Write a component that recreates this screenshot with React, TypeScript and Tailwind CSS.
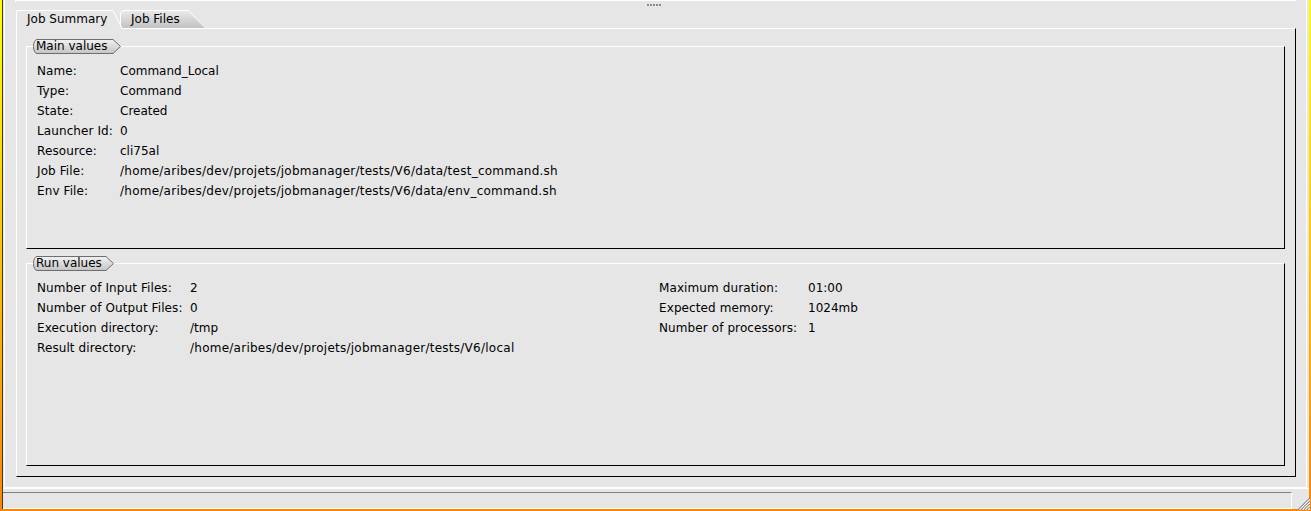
import React from "react";

const font = "font-['DejaVu_Sans',sans-serif]";

function Pill({ label, width }: { label: string; width: number }) {
  const w = width;
  const id = "g" + label.replace(/\s/g, "");
  return (
    <div
      className="absolute left-[6px] top-[-8px] h-[15px]"
      style={{ width: w }}
    >
      <svg className="absolute inset-0" width={w} height={15}>
        <defs>
          <linearGradient id={id} x1="0" y1="0" x2="0" y2="1">
            <stop offset="0" stopColor="#f2f2f2" />
            <stop offset="1" stopColor="#c4c4c4" />
          </linearGradient>
        </defs>
        <path
          d={`M4 0.5 H${w - 8} L${w - 0.5} 7.5 L${w - 8} 14.5 H4 A3.5 7 0 0 1 4 0.5 Z`}
          fill={`url(#${id})`}
          stroke="#6e6e6e"
          strokeWidth="1"
        />
      </svg>
      <div className="relative pl-[3px] text-[12px] leading-[15px] text-black whitespace-nowrap">
        {label}
      </div>
    </div>
  );
}

function TitledPanel({
  title,
  pillWidth,
  className,
  children,
}: {
  title: string;
  pillWidth: number;
  className?: string;
  children: React.ReactNode;
}) {
  return (
    <div
      className={
        "relative h-[203px] border-t border-l border-white border-r border-b border-r-black border-b-black pt-[14px] pl-[10px] " +
        (className ?? "")
      }
    >
      <Pill label={title} width={pillWidth} />
      {children}
    </div>
  );
}

function Row({ k, v, w }: { k: string; v: string; w: string }) {
  const isPath = v.startsWith("/home");
  return (
    <div className="flex h-[20px] leading-[20px] text-[12px] text-black whitespace-nowrap">
      <div className={w + " tracking-[0.1px]"}>{k}</div>
      <div className={isPath ? "tracking-[0.25px]" : ""}>{v}</div>
    </div>
  );
}

export default function App() {
  const mainRows: [string, string][] = [
    ["Name:", "Command_Local"],
    ["Type:", "Command"],
    ["State:", "Created"],
    ["Launcher Id:", "0"],
    ["Resource:", "cli75al"],
    ["Job File:", "/home/aribes/dev/projets/jobmanager/tests/V6/data/test_command.sh"],
    ["Env File:", "/home/aribes/dev/projets/jobmanager/tests/V6/data/env_command.sh"],
  ];
  const runLeft: [string, string][] = [
    ["Number of Input Files:", "2"],
    ["Number of Output Files:", "0"],
    ["Execution directory:", "/tmp"],
    ["Result directory:", "/home/aribes/dev/projets/jobmanager/tests/V6/local"],
  ];
  const runRight: [string, string][] = [
    ["Maximum duration:", "01:00"],
    ["Expected memory:", "1024mb"],
    ["Number of processors:", "1"],
  ];

  return (
    <div
      className={
        "relative w-[1311px] h-[511px] bg-gradient-to-b from-[#ffff00] to-[#ff8400] pl-[2px] pr-[2px] pb-[2px] " +
        font
      }
    >
      <div className="h-full bg-[#e6e6e6] border-l border-[#3a3a3a] flex flex-col">
        {/* Panel A */}
        <div className="ml-[1px] mr-[2px] h-[488px] border-l border-r border-b border-white flex flex-col">
          {/* split divider */}
          <div className="h-[10px]">
            <div className="ml-[10px] w-[1281px] h-[2px] border-l border-t border-white" />
            <div className="ml-[642px] mt-[2px] flex gap-[1px]">
              {[0, 1, 2, 3, 4].map((i) => (
                <div key={i} className="w-[2px] h-[2px] bg-[#8c8c8c]" />
              ))}
            </div>
          </div>

          {/* tabbed pane */}
          <div className="ml-[11px] mr-[10px]">
            <div className="h-[18px] flex">
              <div className="relative z-10 w-[107px] h-[19px]">
                <svg className="absolute inset-0" width="107" height="19">
                  <path d="M0 19 V0 H97 L107 19 Z" fill="#e6e6e6" />
                  <path
                    d="M0.5 19 V0.5 H97 L106 18.5"
                    fill="none"
                    stroke="#ffffff"
                    strokeWidth="1"
                  />
                </svg>
                <div className="relative pl-[11px] text-[12px] leading-[18px] text-black whitespace-nowrap">
                  Job Summary
                </div>
              </div>
              <div className="relative -ml-[3px] w-[86px] h-[18px]">
                <svg className="absolute inset-0" width="86" height="18">
                  <defs>
                    <linearGradient id="tabg" x1="0" y1="0" x2="0" y2="1">
                      <stop offset="0" stopColor="#ebebeb" />
                      <stop offset="1" stopColor="#c2c2c2" />
                    </linearGradient>
                  </defs>
                  <path d="M0 18 V4 Q0 0 4 0 H68 L86 18 Z" fill="url(#tabg)" />
                  <path
                    d="M0.5 18 V4 Q0.5 0.5 4 0.5 H68 L85.5 18"
                    fill="none"
                    stroke="#ffffff"
                    strokeWidth="1"
                  />
                </svg>
                <div className="relative pl-[11px] text-[12px] leading-[18px] text-black whitespace-nowrap">
                  Job Files
                </div>
              </div>
            </div>
            <div className="h-[449px] border-t border-l border-white border-r border-b border-r-black border-b-black pt-[17px] pl-[9px] pr-[10px]">
              <TitledPanel title="Main values" pillWidth={88}>
                {mainRows.map(([k, v]) => (
                  <Row key={k} k={k} v={v} w="w-[83px]" />
                ))}
              </TitledPanel>
              <TitledPanel title="Run values" pillWidth={81} className="mt-[14px]">
                <div className="flex">
                  <div className="w-[622px]">
                    {runLeft.map(([k, v]) => (
                      <Row key={k} k={k} v={v} w="w-[153px]" />
                    ))}
                  </div>
                  <div>
                    {runRight.map(([k, v]) => (
                      <Row key={k} k={k} v={v} w="w-[149px]" />
                    ))}
                  </div>
                </div>
              </TitledPanel>
            </div>
          </div>
        </div>

        {/* bottom status area */}
        <div className="h-[1px] bg-white" />
        <div className="h-[3px]" />
        <div className="w-[1289px] h-[17px] border-t border-[#808080] border-r border-b border-r-white border-b-white" />
      </div>

      {/* resize grip */}
      <svg
        className="absolute right-[1px] bottom-[1px]"
        width="13"
        height="13"
        viewBox="0 0 13 13"
      >
        {[1, 4, 7, 10].map((o) => (
          <g key={o}>
            <line x1={o} y1={13} x2={13} y2={o} stroke="#8a8a8a" strokeWidth="1.4" />
            <line x1={o + 1.5} y1={13} x2={13} y2={o + 1.5} stroke="#ffffff" strokeWidth="1.2" />
          </g>
        ))}
      </svg>
    </div>
  );
}
